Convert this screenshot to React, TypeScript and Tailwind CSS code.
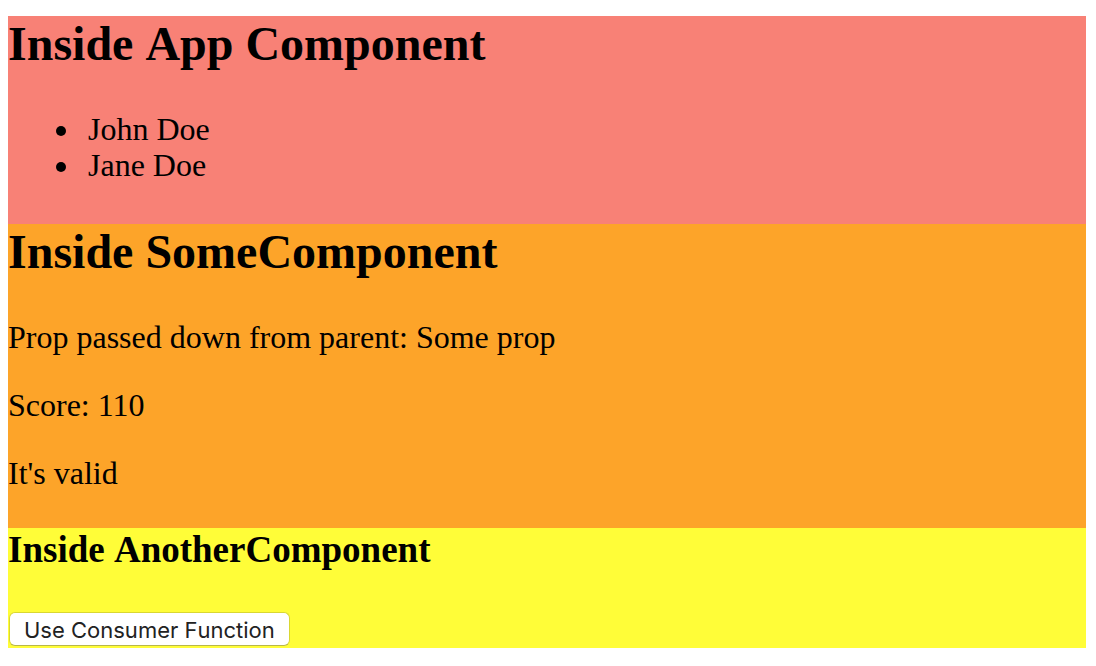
import React from "react";

const users = ["John Doe", "Jane Doe"];

function AnotherComponent() {
  return (
    <section className="bg-[#fffd38]">
      <h3 className="text-[37px] leading-[44px] font-bold [font-kerning:none]">Inside AnotherComponent</h3>
      <div className="flex px-px pt-10 pb-0.5">
        <button
          type="button"
          className="rounded-md border border-[#d9d732] border-b-[#b8b64a] bg-white px-3.5 pt-0.5 font-['Inter',sans-serif] text-[22px] leading-[30px] text-[#222222] [font-kerning:none]"
        >
          Use Consumer Function
        </button>
      </div>
    </section>
  );
}

function SomeComponent({ someProp, score }: { someProp: string; score: number }) {
  return (
    <section className="bg-[#fda429]">
      <h2 className="text-[48px] leading-[56px] font-bold [font-kerning:none]">Inside SomeComponent</h2>
      <div className="flex flex-col gap-8 pt-[39px] pb-[37px]">
        <p>Prop passed down from parent: {someProp}</p>
        <p>Score: {score}</p>
        <p>It's valid</p>
      </div>
      <AnotherComponent />
    </section>
  );
}

export default function App() {
  return (
    <main className="bg-white py-4 pr-2.5 pl-2 font-['Liberation_Serif',serif] text-[32px] leading-9 text-black">
      <div className="bg-[#f88176]">
        <h2 className="text-[48px] leading-[56px] font-bold [font-kerning:none]">Inside App Component</h2>
        <ul className="list-disc pt-[39px] pb-[41px] pl-[74px]">
          {users.map((name) => (
            <li key={name} className="pl-1.5">
              {name}
            </li>
          ))}
        </ul>
        <SomeComponent someProp="Some prop" score={110} />
      </div>
    </main>
  );
}
